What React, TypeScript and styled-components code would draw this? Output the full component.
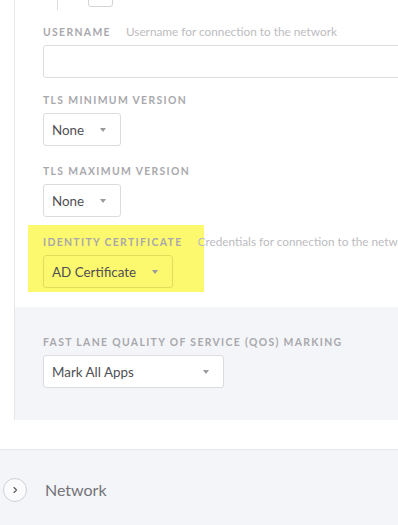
import React from 'react';
import styled, { createGlobalStyle, css } from 'styled-components';

const GlobalStyle = createGlobalStyle`
    html, body { margin: 0; padding: 0; background: #ffffff; }
    body { font-family: Lato, "Open Sans", Arial, sans-serif; overflow: hidden; }
`;

const Page = styled.div`
    width: 398px;
    height: 525px;
    overflow: hidden;
    display: flex;
    flex-direction: column;
`;

const Panel = styled.div`
    margin-left: 14px;
    border-left: 1px solid #e6e6e9;
    display: flex;
    flex-direction: column;
`;

const WhiteSection = styled.div`
    padding: 0 0 19px 28px;
`;

const GraySection = styled.div`
    background: #f4f5f8;
    padding: 28px 0 32px 28px;
`;

// remains of the previous control cut off at the top edge
const PrevControl = styled.div`
    height: 10px;
    position: relative;
    margin-bottom: 15px;
`;
const PrevDivider = styled.div`
    position: absolute;
    left: 14px;
    top: 0;
    width: 1px;
    height: 10px;
    background: #dcdcdf;
`;
const PrevBox = styled.div`
    position: absolute;
    left: 45px;
    top: -4px;
    width: 25px;
    height: 11px;
    border: 1px solid #d4d4d8;
    border-radius: 3px;
    box-sizing: border-box;
`;

const Field = styled.div<{ $highlight?: boolean; $gap?: number }>`
    position: relative;
    margin-bottom: ${p => p.$gap ?? 18}px;
    &:last-child { margin-bottom: 0; }
    ${p => p.$highlight && css`
        &::before {
            content: '';
            position: absolute;
            left: -15px;
            top: -10px;
            width: 176px;
            height: 67px;
            background: #fdf96e;
            z-index: 0;
        }
    `}
`;

const LabelRow = styled.div`
    position: relative;
    z-index: 1;
    display: flex;
    align-items: baseline;
    gap: 15px;
    height: 14px;
    line-height: 14px;
    margin-bottom: 6px;
    white-space: nowrap;
`;

const Label = styled.span`
    font-size: 10.4px;
    font-weight: 700;
    letter-spacing: 1.35px;
    text-transform: uppercase;
    color: #a8a8ad;
`;

const Hint = styled.span`
    font-size: 11.8px;
    color: #bcbcc0;
`;

const TextInput = styled.div`
    width: 380px;
    height: 33px;
    box-sizing: border-box;
    border: 1px solid #dddde0;
    border-radius: 3px;
    background: #fff;
`;

const Select = styled.div<{ $width?: number }>`
    position: relative;
    z-index: 1;
    display: inline-flex;
    align-items: center;
    justify-content: space-between;
    gap: 16px;
    height: 33px;
    box-sizing: border-box;
    ${p => p.$width && css`width: ${p.$width}px;`}
    padding: 0 14px 0 8px;
    border: 1px solid #dcdce0;
    border-radius: 3px;
    background: #fff;
    font-size: 13.4px;
    color: #4f4f54;
`;

const Highlighted = styled(Select)`
    background: transparent;
    border-color: #e4dd5c;
`;

const Caret = styled.span`
    width: 0;
    height: 0;
    border-left: 3.5px solid transparent;
    border-right: 3.5px solid transparent;
    border-top: 4.5px solid #9a9aa0;
    margin-top: 1px;
`;

const Spacer = styled.div`
    height: 29px;
`;

const Footer = styled.div`
    flex: 1;
    border-top: 1px solid #e6e7eb;
    background: #f4f5f8;
    display: flex;
    align-items: flex-start;
    padding: 28px 0 0 3px;
    gap: 18px;
`;

const ExpandButton = styled.div`
    width: 24px;
    height: 24px;
    box-sizing: border-box;
    border-radius: 50%;
    border: 1px solid #cfd0d5;
    background: #fbfbfd;
    display: flex;
    align-items: center;
    justify-content: center;
    color: #55555a;
`;

const SectionTitle = styled.span`
    font-size: 16px;
    color: #737378;
    line-height: 24px;
`;

export default function App() {
    return (
        <Page>
            <GlobalStyle />
            <Panel>
                <WhiteSection>
                    <PrevControl>
                        <PrevDivider />
                        <PrevBox />
                    </PrevControl>
                    <Field $gap={15}>
                        <LabelRow>
                            <Label>Username</Label>
                            <Hint>Username for connection to the network</Hint>
                        </LabelRow>
                        <TextInput />
                    </Field>
                    <Field>
                        <LabelRow><Label>TLS Minimum Version</Label></LabelRow>
                        <Select>None<Caret /></Select>
                    </Field>
                    <Field>
                        <LabelRow><Label>TLS Maximum Version</Label></LabelRow>
                        <Select>None<Caret /></Select>
                    </Field>
                    <Field $highlight>
                        <LabelRow>
                            <Label>Identity Certificate</Label>
                            <Hint>Credentials for connection to the network</Hint>
                        </LabelRow>
                        <Highlighted>AD Certificate<Caret /></Highlighted>
                    </Field>
                </WhiteSection>
                <GraySection>
                    <Field>
                        <LabelRow><Label>Fast Lane Quality of Service (QoS) Marking</Label></LabelRow>
                        <Select $width={181}>Mark All Apps<Caret /></Select>
                    </Field>
                </GraySection>
            </Panel>
            <Spacer />
            <Footer>
                <ExpandButton>
                    <svg width="8" height="8" viewBox="0 0 8 8" fill="none">
                        <path d="M3 1.5 L5.5 4 L3 6.5" stroke="currentColor" strokeWidth="1.1" strokeLinecap="round" strokeLinejoin="round" />
                    </svg>
                </ExpandButton>
                <SectionTitle>Network</SectionTitle>
            </Footer>
        </Page>
    );
}
